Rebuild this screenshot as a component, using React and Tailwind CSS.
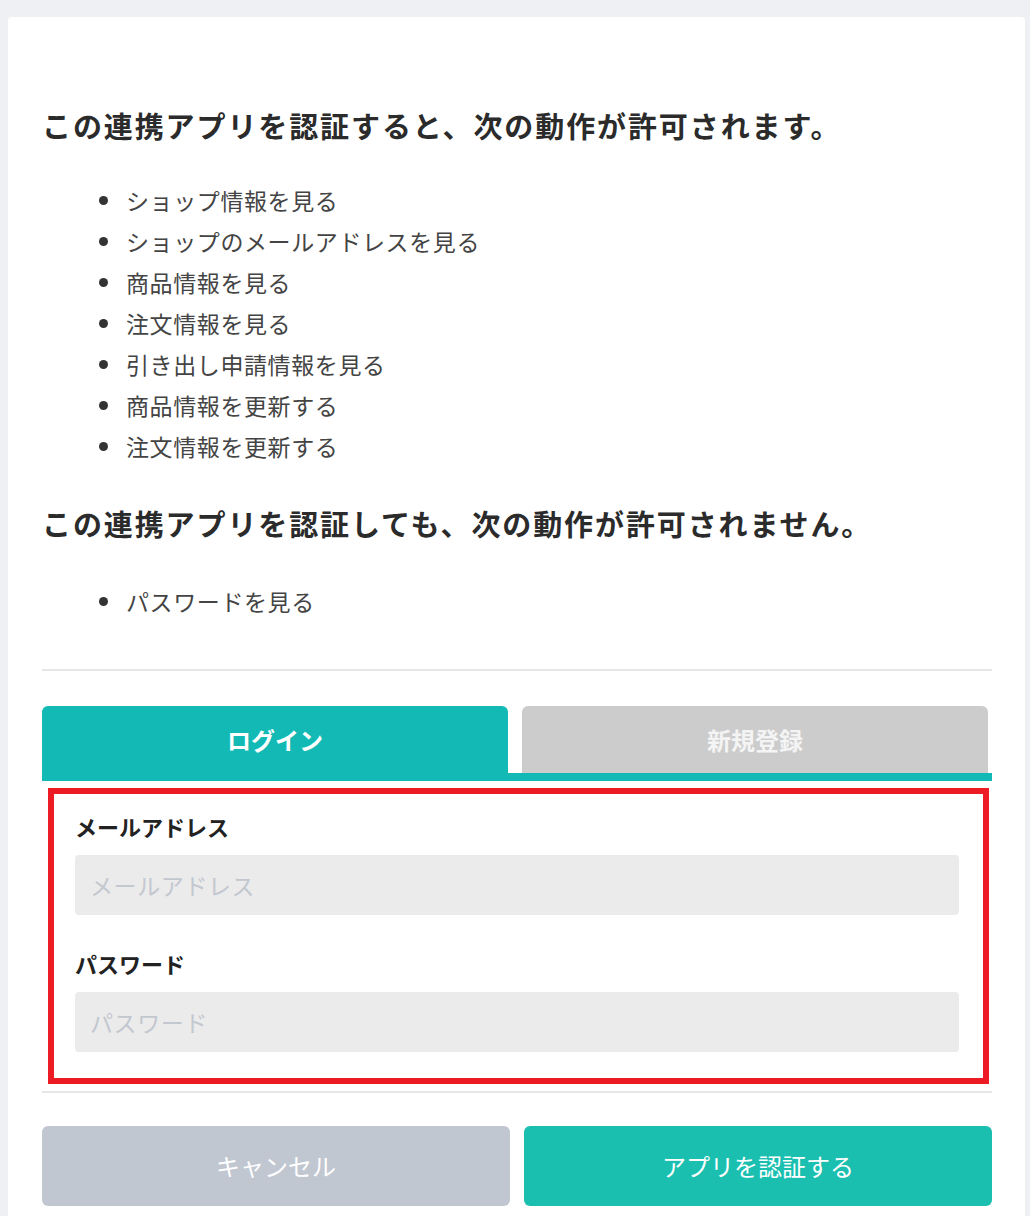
const allowed = [
  "ショップ情報を見る",
  "ショップのメールアドレスを見る",
  "商品情報を見る",
  "注文情報を見る",
  "引き出し申請情報を見る",
  "商品情報を更新する",
  "注文情報を更新する",
];

const denied = ["パスワードを見る"];

function PermissionList({ items }) {
  return (
    <ul className="list-disc pl-[82px] text-[23px] leading-[41px] tracking-[0.6px] text-[#444] marker:text-[#333]">
      {items.map((t) => (
        <li key={t} className="pl-[2px]">{t}</li>
      ))}
    </ul>
  );
}

export default function App() {
  return (
    <div
      className="min-h-[1216px] bg-[#eff0f4] pt-[17px] pl-2 pr-[5px]"
      style={{ fontFamily: '"Noto Sans CJK JP", "Noto Sans", sans-serif' }}
    >
      <div className="bg-white rounded-t-[4px] pl-[34px] pr-[33px] pt-[90px] pb-[12px]">
        <h2 className="text-[29px] leading-[36px] font-bold text-[#2b2b2b] tracking-[1.9px]">
          この連携アプリを認証すると、次の動作が許可されます。
        </h2>
        <div className="mt-[37px]">
          <PermissionList items={allowed} />
        </div>

        <h2 className="mt-[38px] text-[29px] leading-[36px] font-bold text-[#2b2b2b] tracking-[1.9px]">
          この連携アプリを認証しても、次の動作が許可されません。
        </h2>
        <div className="mt-[40px]">
          <PermissionList items={denied} />
        </div>

        <div className="mt-[47px] border-t-2 border-[#e6e6e6]" />

        {/* tabs */}
        <div className="mt-[35px]">
          <div className="flex gap-[14px] pr-[4px]">
            <button className="flex-1 h-[67px] rounded-t-[6px] bg-[#13bab5] text-white text-[24px] font-bold">
              ログイン
            </button>
            <button className="flex-1 h-[67px] rounded-t-[6px] bg-[#cccccc] text-[#f4f4f4] text-[24px] font-bold">
              新規登録
            </button>
          </div>
          <div className="h-[8px] bg-[#13bab5]" />
        </div>

        {/* form */}
        <div className="mt-[7px] ml-[6px] mr-[3px] border-[6px] border-[#ed1c24] pl-[21px] pr-[24px] pt-[17px] pb-[26px]">
          <label className="block text-[22px] leading-[30px] font-bold text-[#222]">メールアドレス</label>
          <input
            className="mt-[14px] block w-full h-[60px] rounded-[4px] bg-[#ebebeb] px-[15px] text-[23px] tracking-[0.6px] text-[#333] placeholder:text-[#c3c7cf] outline-none"
            placeholder="メールアドレス"
          />
          <label className="mt-[33px] block text-[22px] leading-[30px] font-bold text-[#222]">パスワード</label>
          <input
            type="password"
            className="mt-[14px] block w-full h-[60px] rounded-[4px] bg-[#ebebeb] px-[15px] text-[23px] tracking-[0.6px] text-[#333] placeholder:text-[#c3c7cf] outline-none"
            placeholder="パスワード"
          />
        </div>

        <div className="mt-[7px] border-t-2 border-[#e6e6e6]" />

        <div className="mt-[33px] flex gap-[14px]">
          <button className="flex-1 h-[80px] rounded-[6px] bg-[#c1c7d1] text-white text-[24px]">
            キャンセル
          </button>
          <button className="flex-1 h-[80px] rounded-[6px] bg-[#1abfb0] text-white text-[24px]">
            アプリを認証する
          </button>
        </div>
      </div>
    </div>
  );
}
